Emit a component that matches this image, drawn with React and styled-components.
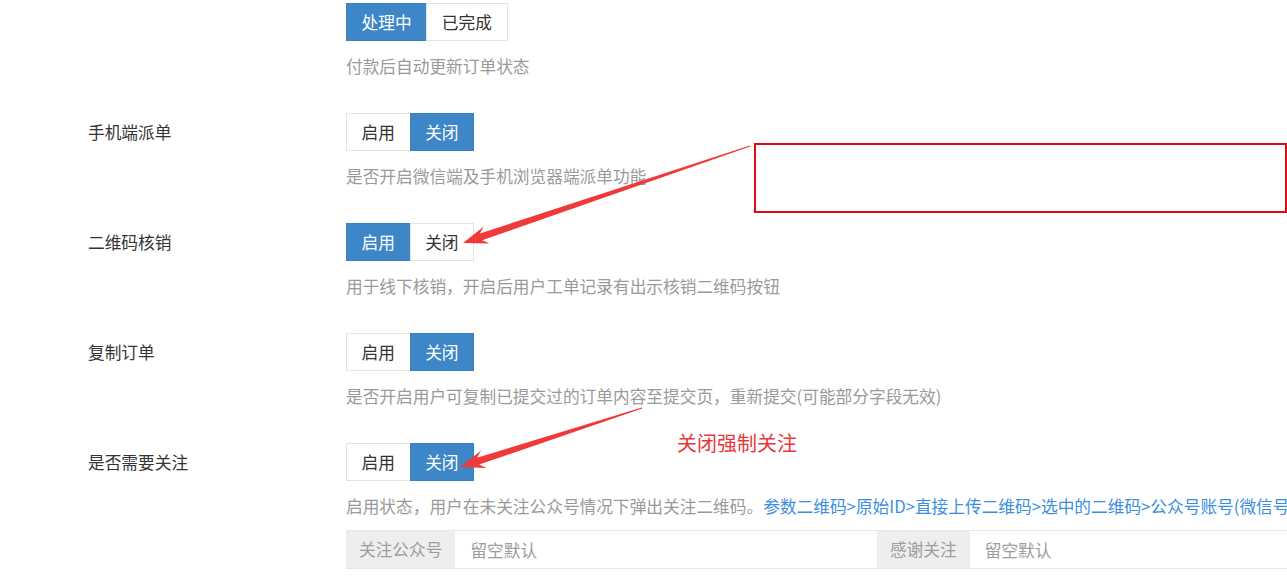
import React from 'react'
import styled, { createGlobalStyle } from 'styled-components'

const GlobalStyle = createGlobalStyle`
  html, body {
    margin: 0;
    padding: 0;
    background: #fff;
    overflow: hidden;
  }
  body {
    font-family: "Noto Sans CJK SC", "Microsoft YaHei", "Liberation Sans", sans-serif;
    font-size: 16.7px;
    color: #333;
  }
`

const Page = styled.div`
  position: relative;
  width: 1287px;
  height: 585px;
  overflow: hidden;
  padding-top: 3px;
  box-sizing: border-box;
`

const FormRow = styled.div`
  display: grid;
  grid-template-columns: 258px 1fr;
  padding-left: 88px;
  margin-bottom: 35px;
`

const Label = styled.div`
  line-height: 38px;
  height: 38px;
  color: #333;
  white-space: nowrap;
`

const Control = styled.div`
  display: flex;
  flex-direction: column;
  align-items: flex-start;
`

const BtnGroup = styled.div`
  display: flex;
`

const Btn = styled.div`
  box-sizing: border-box;
  height: 38px;
  line-height: 22px;
  padding: 7px 14.6px;
  border: 1px solid ${p => (p.$active ? '#3a82c0' : '#e3e3e3')};
  background: ${p => (p.$active ? '#3d86c7' : '#fff')};
  color: ${p => (p.$active ? '#fff' : '#333')};
  white-space: nowrap;
  & + & {
    margin-left: -1px;
  }
`

const Help = styled.div`
  margin-top: 13px;
  line-height: 24px;
  color: #9a9a9a;
  white-space: nowrap;
`

const Link = styled.span`
  color: #3b8ee0;
`

const InputRow = styled.div`
  display: flex;
  margin-top: 12px;
`

const InputGroup = styled.div`
  display: flex;
  width: 531px;
  height: 39px;
  box-sizing: border-box;
  border-top: 1px solid #e6e6e6;
  border-bottom: 1px solid #e6e6e6;
`

const Addon = styled.div`
  background: #eee;
  color: #9d9d9d;
  line-height: 37px;
  padding: 0 13px;
  white-space: nowrap;
`

const Input = styled.input`
  flex: 1;
  border: none;
  outline: none;
  padding: 0 15px;
  font: inherit;
  color: #555;
  background: #fff;
  &::placeholder {
    color: #9d9d9d;
  }
`

const Note = styled.div`
  position: absolute;
  left: 677px;
  top: 429px;
  font-size: 20px;
  line-height: 28px;
  color: #e8373b;
  white-space: nowrap;
`

const RedBox = styled.div`
  position: absolute;
  left: 754px;
  top: 143px;
  width: 533px;
  height: 70px;
  box-sizing: border-box;
  border: 2px solid #e4080f;
`

const Overlay = styled.svg`
  position: absolute;
  left: 0;
  top: 0;
  pointer-events: none;
`

const arrowPoints = (tail, tip) => {
  const dx = tip[0] - tail[0]
  const dy = tip[1] - tail[1]
  const L = Math.hypot(dx, dy)
  const ux = dx / L
  const uy = dy / L
  const nx = -uy
  const ny = ux
  const at = (d, w) => [tail[0] + ux * d + nx * w, tail[1] + uy * d + ny * w]
  const pts = [
    at(0, 0.5),
    at(L - 19, 3.6),
    at(L - 25, 9),
    [tip[0], tip[1]],
    at(L - 25, -9),
    at(L - 19, -3.6),
    at(0, -0.5),
  ]
  return pts.map(p => p[0].toFixed(1) + ',' + p[1].toFixed(1)).join(' ')
}

const Arrow = ({ tail, tip }) => (
  <polygon points={arrowPoints(tail, tip)} fill="#f03a3a" />
)

const Toggle = ({ on }) => (
  <BtnGroup>
    <Btn $active={on}>启用</Btn>
    <Btn $active={!on}>关闭</Btn>
  </BtnGroup>
)

const App = () => (
  <Page>
    <GlobalStyle />
    <FormRow>
      <Label />
      <Control>
        <BtnGroup>
          <Btn $active>处理中</Btn>
          <Btn>已完成</Btn>
        </BtnGroup>
        <Help>付款后自动更新订单状态</Help>
      </Control>
    </FormRow>

    <FormRow>
      <Label>手机端派单</Label>
      <Control>
        <Toggle on={false} />
        <Help>是否开启微信端及手机浏览器端派单功能</Help>
      </Control>
    </FormRow>

    <FormRow>
      <Label>二维码核销</Label>
      <Control>
        <Toggle on />
        <Help>用于线下核销，开启后用户工单记录有出示核销二维码按钮</Help>
      </Control>
    </FormRow>

    <FormRow>
      <Label>复制订单</Label>
      <Control>
        <Toggle on={false} />
        <Help>是否开启用户可复制已提交过的订单内容至提交页，重新提交(可能部分字段无效)</Help>
      </Control>
    </FormRow>

    <FormRow>
      <Label>是否需要关注</Label>
      <Control>
        <Toggle on={false} />
        <Help>
          启用状态，用户在未关注公众号情况下弹出关注二维码。
          <Link>参数二维码&gt;原始ID&gt;直接上传二维码&gt;选中的二维码&gt;公众号账号(微信号)</Link>
        </Help>
        <InputRow>
          <InputGroup>
            <Addon>关注公众号</Addon>
            <Input placeholder="留空默认" />
          </InputGroup>
          <InputGroup>
            <Addon>感谢关注</Addon>
            <Input placeholder="留空默认" />
          </InputGroup>
        </InputRow>
      </Control>
    </FormRow>

    <RedBox />
    <Note>关闭强制关注</Note>
    <Overlay width="1287" height="585" viewBox="0 0 1287 585">
      <Arrow tail={[750, 146]} tip={[463, 243]} />
      <Arrow tail={[642, 408]} tip={[460, 467]} />
    </Overlay>
  </Page>
)

export default App
